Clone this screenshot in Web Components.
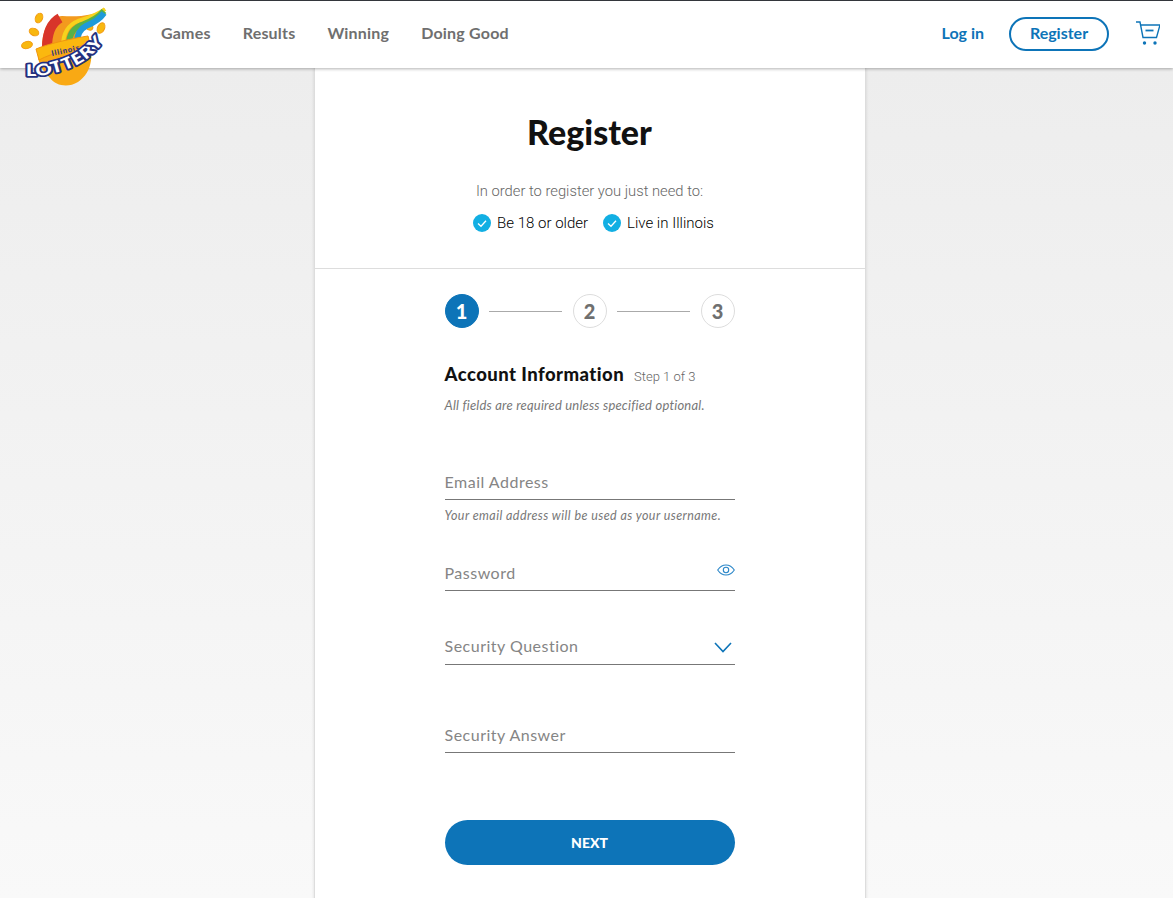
<!DOCTYPE html>
<html>
<head>
<meta charset="utf-8">
<title>Register</title>
<style>
  html, body { margin: 0; height: 898px; overflow: hidden; }
  body {
    background: linear-gradient(#ececec, #f9f9f9);
    font-family: Lato, "Noto Sans", sans-serif;
    color: #111;
  }
  main { display: flex; justify-content: center; padding-left: 6px; }
</style>
</head>
<body>
<site-header></site-header>
<main>
  <register-card>
    <form-steps slot="steps"></form-steps>
    <form-field label="Email Address" hint="Your email address will be used as your username." style="margin-top:54px"></form-field>
    <form-field label="Password" icon="eye" style="margin-top:35px"></form-field>
    <form-field label="Security Question" icon="chevron" style="margin-top:42px"></form-field>
    <form-field label="Security Answer" style="margin-top:56px"></form-field>
  </register-card>
</main>

<script>
class SiteHeader extends HTMLElement {
  constructor() {
    super();
    const shadow = this.attachShadow({ mode: "open" });
    shadow.innerHTML = `
    <style>
      :host { display: block; position: relative; z-index: 2; box-sizing: border-box; height: 68px; background: #fff;
        border-top: 1px solid #33363b; box-shadow: 0 1px 3px rgba(0,0,0,.3); }
      .bar { display: flex; align-items: center; box-sizing: border-box; height: 100%; padding: 0 13px 5px 161px; }
      .logo { position: absolute; left: 0; top: -1px; width: 130px; height: 95px; }
      nav { display: flex; gap: 32px; font: 700 16px Lato, sans-serif; letter-spacing: .2px; color: #6f6f6f; }
      .right { margin-left: auto; display: flex; align-items: center; font: 700 16px Lato, sans-serif; color: #0d74b8; }
      .right > svg { margin-top: 2px; }
      .reg { box-sizing: border-box; width: 100px; height: 34px; margin: 4px 27px 0 25px; padding-bottom: 4px; border: 2px solid #0d74b8;
        border-radius: 17px; display: flex; align-items: center; justify-content: center; }
    </style>
    <svg class="logo" viewBox="0 0 130 95">
      <g fill="#f8b80f" stroke="#f29a10">
        <ellipse cx="39" cy="18" rx="3.500" ry="5" transform="rotate(25 39 18)"/>
        <ellipse cx="34" cy="32" rx="5" ry="3.500" transform="rotate(25 34 32)"/>
        <ellipse cx="27" cy="45" rx="5.500" ry="3.500" transform="rotate(-15 27 45)"/>
        <ellipse cx="89" cy="27" rx="4" ry="2.800" transform="rotate(25 89 27)"/>
        <ellipse cx="101" cy="28" rx="3.500" ry="5.500" transform="rotate(25 101 28)"/>
      </g>
      <path d="M38 52C50 46 75 40 88 38C94 52 93 72 78 82C68 88 56 86 50 78C42 70 37 62 38 52Z" fill="#f9a914"/>
      <path d="M42 48C42 28 50 17 62 16C78 17 95 16 105 8C102 20 90 25 82 28C77 31 76 36 76 42Z" fill="#f39a1e"/>
      <path d="M47 48C47 32 51 23 60 18" fill="none" stroke="#d8352a" stroke-width="10"/>
      <path d="M63 46C63 33 68 25 78 21C88 18 98 15 105 9" fill="none" stroke="#f7d21c" stroke-width="4"/>
      <path d="M69 45C69 33 74 27 84 24C92 21 99 17 104 11" fill="none" stroke="#57b147" stroke-width="6"/>
      <path d="M77 43C77 34 80 29 86 26C93 23 100 19 104 13" fill="none" stroke="#1e9ad9" stroke-width="6"/>
      <path d="M36 49C50 43 75 38 88 36L90 44C75 47 52 53 39 60Z" fill="#fbb80f" stroke="#f0950f"/>
      <text x="52" y="56" font-family="Lato, sans-serif" font-weight="900" font-size="7.500" fill="#2b3587" transform="rotate(-12 52 56)" textLength="28">Illinois</text>
      <path id="lotto" d="M26 76C48 77 72 70 88 58C94 53 100 47 104 41" fill="none"/>
      <text font-family="Lato, sans-serif" font-weight="900" font-size="16" fill="#fff" stroke="#23307f" stroke-width="3.500" paint-order="stroke" stroke-linejoin="round"><textPath href="#lotto" textLength="88" lengthAdjust="spacingAndGlyphs">LOTTERY</textPath></text>
    </svg>
    <div class="bar">
      <nav><span>Games</span><span>Results</span><span>Winning</span><span>Doing Good</span></nav>
      <div class="right">
        <span>Log in</span>
        <span class="reg">Register</span>
        <svg width="24" height="25" viewBox="0 0 24 25" fill="none" stroke="#0d74b8" stroke-width="1.400">
          <path d="M0 1h4l3 15.500h13.500L24 4H5"/>
          <path d="M9.500 9.500h8" stroke-width="1.800"/>
          <circle cx="8.500" cy="22" r="1.700" fill="#0d74b8" stroke="none"/>
          <circle cx="19" cy="22" r="1.700" fill="#0d74b8" stroke="none"/>
        </svg>
      </div>
    </div>`;
  }
}

class RegisterCard extends HTMLElement {
  constructor() {
    super();
    const shadow = this.attachShadow({ mode: "open" });
    shadow.innerHTML = `
    <style>
      :host { display: block; box-sizing: border-box; width: 552px; height: 840px; background: #fff;
        border: 1px solid #ddd; border-top: 0; box-shadow: 0 0 3px rgba(0,0,0,.12); }
      header { height: 200px; border-bottom: 1px solid #ddd; display: flex; flex-direction: column; align-items: center; }
      h1 { margin: 44px 0 0; font: 900 34px/40px Lato, sans-serif; color: #111; }
      .lead { margin: 29px 0 0; font: 300 14.750px/20px Roboto, sans-serif; color: #666; }
      .checks { display: flex; gap: 15px; margin: 12px 0 0 8px; font: 300 15px/20px Roboto, sans-serif; color: #000; }
      .checks span { display: flex; align-items: center; gap: 6px; }
      .body { width: 290px; margin: 0 auto; padding-top: 25px; }
      h2 { display: flex; align-items: baseline; gap: 10px; margin: 34px 0 0; font: 900 18.500px/24px Lato, sans-serif; letter-spacing: .45px; color: #111; }
      h2 small { font: 300 13px/20px Roboto, sans-serif; letter-spacing: 0; color: #666; }
      .note { margin: 9px 0 0; font: italic 400 13px/18px Lato, sans-serif; letter-spacing: .2px; color: #777; }
      button { display: block; width: 290px; height: 45px; margin-top: 67px; border: 0; border-radius: 23px; background: #0d74b8;
        color: #fff; font: 900 14px Lato, sans-serif; }
    </style>
    <header>
      <h1>Register</h1>
      <p class="lead">In order to register you just need to:</p>
      <div class="checks">
        <span><check-mark></check-mark>Be 18 or older</span>
        <span><check-mark></check-mark>Live in Illinois</span>
      </div>
    </header>
    <div class="body">
      <slot name="steps"></slot>
      <h2>Account Information <small>Step 1 of 3</small></h2>
      <p class="note">All fields are required unless specified optional.</p>
      <slot></slot>
      <button type="button">NEXT</button>
    </div>`;
  }
}

class CheckMark extends HTMLElement {
  constructor() {
    super();
    const shadow = this.attachShadow({ mode: "open" });
    shadow.innerHTML = `
    <style>:host { display: inline-flex; }</style>
    <svg width="18" height="18" viewBox="0 0 18 18">
      <circle cx="9" cy="9" r="9" fill="#12afe3"/>
      <path d="M5 9.500l3 2.800 5-5.600" fill="none" stroke="#fff" stroke-width="1.300"/>
    </svg>`;
  }
}

class FormSteps extends HTMLElement {
  constructor() {
    super();
    const shadow = this.attachShadow({ mode: "open" });
    shadow.innerHTML = `
    <style>
      :host { display: flex; align-items: center; justify-content: space-between; height: 34px; }
      b { box-sizing: border-box; width: 34px; height: 34px; border-radius: 50%; border: 1px solid #ddd; color: #6f6f6f;
        display: flex; align-items: center; justify-content: center; font: 900 20px Lato, sans-serif; flex: none; }
      b.on { background: #0d74b8; border-color: #0d74b8; color: #fff; }
      i { display: block; width: 73px; height: 1px; background: #aaa; }
    </style>
    <b class="on">1</b><i></i><b>2</b><i></i><b>3</b>`;
  }
}

class FormField extends HTMLElement {
  constructor() {
    super();
    const shadow = this.attachShadow({ mode: "open" });
    const icons = {
      eye: `<svg class="eye" width="18" height="12" viewBox="0 0 18 12" fill="none" stroke="#2a86c8" stroke-width="1.100"><path d="M.7 6C3 2.500 6 1 9 1s6 1.500 8.300 5C15 9.500 12 11 9 11S3 9.500.7 6Z"/><circle cx="9" cy="6" r="2.700"/></svg>`,
      chevron: `<svg class="chev" width="18" height="11" viewBox="0 0 18 11" fill="none" stroke="#0d74b8" stroke-width="1.600"><path d="M1 1l8 8.500L17 1"/></svg>`
    };
    const icon = icons[this.getAttribute("icon")] || "";
    const hint = this.getAttribute("hint");
    shadow.innerHTML = `
    <style>
      :host { display: block; }
      .row { position: relative; box-sizing: border-box; height: 32px; border-bottom: 1px solid #777; display: flex;
        align-items: flex-end; justify-content: space-between; padding-bottom: 7px; font: 400 16px/20px Lato, sans-serif; color: #858585; letter-spacing: .5px; }
      .row:has(.chev) { padding-bottom: 8px; }
      svg { position: absolute; }
      .eye { right: 0; top: 5px; }
      .chev { right: 3px; top: 9px; }
      .hint { margin: 8px 0 0; font: italic 400 12.500px/16px Lato, sans-serif; color: #777; letter-spacing: .42px; }
    </style>
    <div class="row"><span></span>${icon}</div>
    ${hint ? `<p class="hint"></p>` : ""}`;
    shadow.querySelector(".row span").textContent = this.getAttribute("label");
    if (hint) shadow.querySelector(".hint").textContent = hint;
  }
}

customElements.define("site-header", SiteHeader);
customElements.define("register-card", RegisterCard);
customElements.define("check-mark", CheckMark);
customElements.define("form-steps", FormSteps);
customElements.define("form-field", FormField);
</script>
</body>
</html>
